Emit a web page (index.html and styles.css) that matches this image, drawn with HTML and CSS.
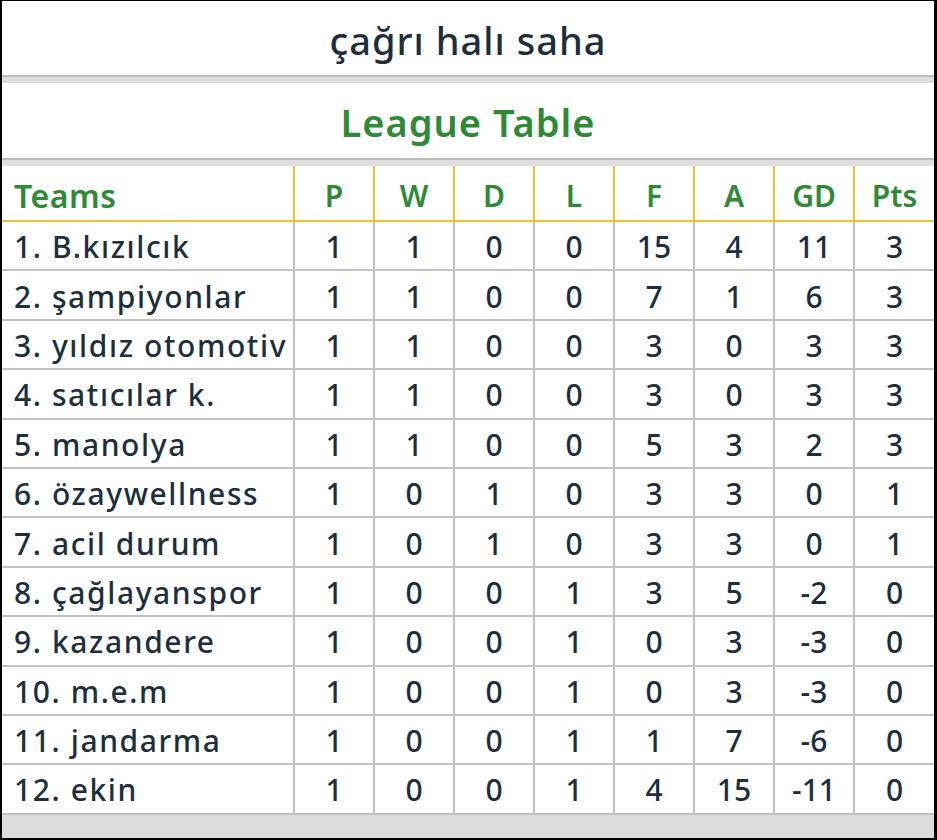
FILE: index.html
```html
<!DOCTYPE html>
<html lang="tr">
<head>
    <meta charset="UTF-8">
    <meta name="viewport" content="width=device-width, initial-scale=1.0">
    <title>çağrı halı saha</title>
    <link rel="stylesheet" href="styles.css">
</head>
<body>
    <div class="frame">
        <div class="bar title">çağrı halı saha</div>
        <div class="sep"></div>
        <div class="bar league">League Table</div>
        <div class="sep"></div>
        <table class="standings">
            <thead>
                <tr>
                    <th class="team">Teams</th>
                    <th>P</th><th>W</th><th>D</th><th>L</th><th>F</th><th>A</th><th>GD</th><th>Pts</th>
                </tr>
            </thead>
            <tbody>
                <tr><td class="team">1. B.kızılcık</td><td>1</td><td>1</td><td>0</td><td>0</td><td>15</td><td>4</td><td>11</td><td>3</td></tr>
                <tr><td class="team">2. şampiyonlar</td><td>1</td><td>1</td><td>0</td><td>0</td><td>7</td><td>1</td><td>6</td><td>3</td></tr>
                <tr><td class="team">3. yıldız otomotiv</td><td>1</td><td>1</td><td>0</td><td>0</td><td>3</td><td>0</td><td>3</td><td>3</td></tr>
                <tr><td class="team">4. satıcılar k.</td><td>1</td><td>1</td><td>0</td><td>0</td><td>3</td><td>0</td><td>3</td><td>3</td></tr>
                <tr><td class="team">5. manolya</td><td>1</td><td>1</td><td>0</td><td>0</td><td>5</td><td>3</td><td>2</td><td>3</td></tr>
                <tr><td class="team">6. özaywellness</td><td>1</td><td>0</td><td>1</td><td>0</td><td>3</td><td>3</td><td>0</td><td>1</td></tr>
                <tr><td class="team">7. acil durum</td><td>1</td><td>0</td><td>1</td><td>0</td><td>3</td><td>3</td><td>0</td><td>1</td></tr>
                <tr><td class="team">8. çağlayanspor</td><td>1</td><td>0</td><td>0</td><td>1</td><td>3</td><td>5</td><td>-2</td><td>0</td></tr>
                <tr><td class="team">9. kazandere</td><td>1</td><td>0</td><td>0</td><td>1</td><td>0</td><td>3</td><td>-3</td><td>0</td></tr>
                <tr><td class="team">10. m.e.m</td><td>1</td><td>0</td><td>0</td><td>1</td><td>0</td><td>3</td><td>-3</td><td>0</td></tr>
                <tr><td class="team">11. jandarma</td><td>1</td><td>0</td><td>0</td><td>1</td><td>1</td><td>7</td><td>-6</td><td>0</td></tr>
                <tr><td class="team">12. ekin</td><td>1</td><td>0</td><td>0</td><td>1</td><td>4</td><td>15</td><td>-11</td><td>0</td></tr>
            </tbody>
        </table>
        <div class="foot"></div>
    </div>
</body>
</html>
```

FILE: styles.css
```css
html, body {
    margin: 0;
    height: 100%;
}
body {
    font-family: "Noto Sans", "Open Sans", sans-serif;
    color: #1d2f3d;
    background: #dcdcdc;
}
.frame {
    box-sizing: border-box;
    height: 840px;
    border-top: 1px solid #000;
    border-left: 2px solid #000;
    border-right: 3px solid #000;
    border-bottom: 2px solid #000;
    background: #dcdcdc;
    display: flex;
    flex-direction: column;
}
.bar {
    background: #fff;
    display: flex;
    align-items: center;
    justify-content: center;
    font-weight: 500;
    font-size: 38px;
    letter-spacing: 1px;
}
.title {
    height: 74px;
    padding-top: 4px;
    box-sizing: border-box;
}
.league {
    height: 75px;
    color: #2e8a36;
    font-weight: 600;
    padding-top: 2px;
    box-sizing: border-box;
}
.sep {
    height: 6px;
    border-top: 2px solid #bcbcbc;
    background: #dedede;
}
.standings {
    width: 100%;
    border-collapse: collapse;
    background: #fff;
    table-layout: fixed;
}
.standings th, .standings td {
    text-align: center;
    padding: 0;
    font-weight: 500;
}
.standings th {
    height: 50px;
    color: #2e8a36;
    font-size: 30px;
    font-weight: 600;
    border-left: 2px solid #e6c630;
    border-bottom: 2px solid #e6c630;
    padding-top: 4px;
}
.standings th.team {
    width: 279px;
    border-left: none;
    padding-left: 12px;
    text-align: left;
    font-size: 32px;
    letter-spacing: 0.5px;
}
.standings td {
    height: 45.4px;
    font-size: 30px;
    border-left: 2px solid #c2c2c2;
    border-bottom: 2px solid #c2c2c2;
    padding-top: 2px;
}
.standings td.team {
    border-left: none;
    text-align: left;
    padding-left: 12px;
    letter-spacing: 1.6px;
    white-space: nowrap;
}
.foot {
    flex: 1;
}
```
